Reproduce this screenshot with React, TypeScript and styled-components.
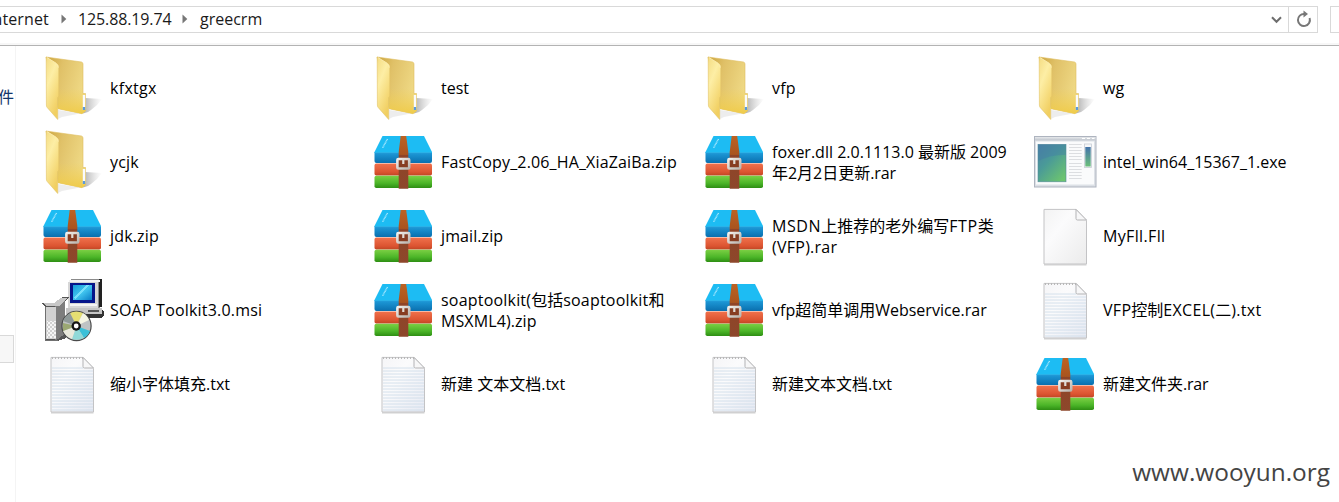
import React from 'react';
import styled, { createGlobalStyle } from 'styled-components';

const Global = createGlobalStyle`
  *, *::before, *::after { box-sizing: border-box; }
  html, body { margin: 0; background: #fff; overflow: hidden; }
  body { font-family: "Open Sans", "Noto Sans", "Noto Sans CJK SC", sans-serif; color: #000; }
  svg { display: block; }
`;

const Explorer = styled.div`
  position: relative;
  display: flex;
  flex-direction: column;
  width: 1339px;
  height: 502px;
  overflow: hidden;
  background: #fff;
`;

const Toolbar = styled.header`
  display: flex;
  flex: none;
  gap: 12px;
  height: 46px;
  padding-top: 6px;
  border-bottom: 1px solid #b3b3b3;
  box-shadow: inset 0 -2px 0 #f7f7f7;
`;

const AddressBar = styled.nav`
  display: flex;
  flex: none;
  align-items: center;
  width: 1318px;
  height: 27px;
  border: 1px solid #d9d9d9;
  border-left: 0;
`;

const Crumb = styled.span<{ $width: number; $shift?: number; $track?: number }>`
  flex: none;
  width: ${p => p.$width}px;
  margin-left: ${p => p.$shift ?? 0}px;
  padding-bottom: 2px;
  font-size: 16px;
  line-height: 22px;
  letter-spacing: ${p => p.$track ?? 0}px;
  white-space: nowrap;
  color: #1a1a1a;
`;

const CrumbArrow = styled.span`
  display: flex;
  flex: none;
  width: 30px;
  padding: 0 0 2px 12px;
`;

const DropButton = styled.span`
  display: flex;
  align-items: center;
  justify-content: center;
  width: 23px;
  margin-left: auto;
`;

const RefreshButton = styled.span`
  display: flex;
  align-items: center;
  justify-content: center;
  width: 29px;
  height: 25px;
  padding: 0 0 2px 2px;
  border-left: 1px solid #d9d9d9;
`;

const SearchBox = styled.div`
  flex: none;
  width: 30px;
  height: 27px;
  border: 1px solid #d9d9d9;
`;

const Body = styled.div`
  display: flex;
  flex: 1;
  min-height: 0;
`;

const Sidebar = styled.aside`
  display: flex;
  flex: none;
  flex-direction: column;
  align-items: flex-end;
  width: 16px;
  padding-top: 39px;
  border-right: 1px solid #f4f4f4;
`;

const SideLabel = styled.span`
  margin-right: 1px;
  font-size: 16px;
  line-height: 24px;
  white-space: nowrap;
  color: #12356b;
`;

const SideSelection = styled.div`
  width: 60px;
  height: 28px;
  margin: 226px 1px 0 0;
  border: 1px solid #d9d9d9;
  background: #f7f7f7;
`;

const FileGrid = styled.main`
  display: grid;
  grid-template-columns: repeat(4, 331px);
  grid-auto-rows: 74px;
  align-content: start;
  padding: 5px 0 0 24px;
`;

const FileItem = styled.div`
  display: flex;
  align-items: center;
  gap: 6px;
  svg { flex: none; }
`;

const FileName = styled.div`
  padding-top: 1px;
  font-size: 16px;
  line-height: 21px;
  white-space: nowrap;
`;

const Line = styled.div<{ $track: number }>`
  height: 21px;
  letter-spacing: ${p => p.$track}px;
`;

const Han = styled.span`
  font-family: "Noto Sans CJK SC", sans-serif;
  font-size: 16px;
  line-height: 1;
  letter-spacing: 0;
  font-weight: 400;
`;

const Watermark = styled.div`
  position: absolute;
  right: 9px;
  bottom: 13px;
  font-family: "Open Sans", "Noto Sans", sans-serif;
  font-size: 24.4px;
  line-height: 34px;
  color: #444;
`;

const FolderIcon = () => (
  <svg width="64" height="64" viewBox="0 0 64 64">
    <defs>
      <linearGradient id="fBack" x1="0" y1="0" x2="1" y2="0.4">
        <stop offset=".05" stopColor="#cfa945" /><stop offset=".4" stopColor="#e0c168" /><stop offset="1" stopColor="#efd985" />
      </linearGradient>
      <linearGradient id="fGlow" x1="0" y1="0" x2="0" y2="1">
        <stop offset=".5" stopColor="#f1cf55" stopOpacity="0" /><stop offset="1" stopColor="#efcb4a" />
      </linearGradient>
      <linearGradient id="fFront" x1="0" y1="0" x2=".5" y2="1">
        <stop offset="0" stopColor="#f4dc83" /><stop offset=".4" stopColor="#fdeea5" /><stop offset="1" stopColor="#f1cf61" />
      </linearGradient>
      <linearGradient id="fShade" x1="0" y1="0" x2="1" y2="0">
        <stop offset="0" stopColor="#777" stopOpacity=".6" /><stop offset="1" stopColor="#aaa" stopOpacity="0" />
      </linearGradient>
    </defs>
    <path d="M45 42 L62 43 Q58 49 51 54 Q48 57 43 57.5Z" fill="url(#fShade)" />
    <path d="M18 54 L40 57.5 L22 61 L18 63Z" fill="#999" opacity=".18" />
    <path d="M6 1 L41.5 6 Q43 6.5 43 8 V37.5 H45.5 V55 L42 57.7 L18 52.7Z" fill="url(#fBack)" stroke="#dfbe5f" strokeWidth=".6" />
    <path d="M18 12 L42 7 V37.5 H45.5 V55 L42 57.7 L18 52.7Z" fill="url(#fGlow)" />
    <path d="M42.8 39 H45.2 V53.5 L42.8 54Z" fill="#f9fbff" />
    <path d="M42.8 51 H45.2 V54 H42.8Z" fill="#5b9bdc" />
    <path d="M6.2 1 L16.5 7.3 Q18.8 8.8 18.8 11.5 V40.3 L17.7 41.5 V63.5 L7.2 51.5 Q6.4 50.7 6.4 49Z" fill="url(#fFront)" stroke="#e3c365" strokeWidth=".6" />
    <path d="M7 1.6 L16 7.2 Q18.2 8.8 18.4 11.5" fill="none" stroke="#fff2bb" strokeWidth=".8" />
  </svg>
);

const ArchiveIcon = () => (
  <svg width="64" height="64" viewBox="0 0 64 64">
    <defs>
      <linearGradient id="aBlue" x1="0" y1="0" x2="0" y2="1">
        <stop offset="0" stopColor="#1f9ddc" /><stop offset="1" stopColor="#0a6fae" />
      </linearGradient>
      <linearGradient id="aRed" x1="0" y1="0" x2="0" y2="1">
        <stop offset="0" stopColor="#f0714c" /><stop offset=".7" stopColor="#dc5431" /><stop offset="1" stopColor="#c04524" />
      </linearGradient>
      <linearGradient id="aGreen" x1="0" y1="0" x2="0" y2="1">
        <stop offset="0" stopColor="#7cd044" /><stop offset=".6" stopColor="#4bb528" /><stop offset="1" stopColor="#2d8d13" />
      </linearGradient>
      <linearGradient id="aStrap" x1="0" y1="0" x2="0" y2="1">
        <stop offset="0" stopColor="#bd6222" /><stop offset=".35" stopColor="#a9541f" /><stop offset=".36" stopColor="#8f4427" /><stop offset="1" stopColor="#8d472b" />
      </linearGradient>
      <linearGradient id="aMetal" x1="0" y1="0" x2="1" y2="1">
        <stop offset="0" stopColor="#f2f0ed" /><stop offset="1" stopColor="#bab5af" />
      </linearGradient>
    </defs>
    <path d="M3.5 22 H61 V31 Q61 33 59 33 H5.5 Q3.5 33 3.5 31Z" fill="url(#aBlue)" />
    <path d="M11.5 6 H53 L61 22 V23 H3.5 V22Z" fill="#1dbcf3" />
    <path d="M4 22.7 H60.5" stroke="#36abe0" strokeWidth=".7" />
    <path d="M16.5 9 L11.5 18" stroke="#a9e8ff" strokeWidth="1.5" strokeDasharray="1 .5" />
    <rect x="3.5" y="33.6" width="57.5" height="12" rx="1.8" fill="url(#aRed)" />
    <rect x="3.5" y="45.7" width="57.5" height="12.4" rx="1.8" fill="url(#aGreen)" />
    <path d="M29.7 6 H35.2 L37.3 22 V58.7 H27.7 V22Z" fill="url(#aStrap)" />
    <rect x="26.4" y="29" width="11.8" height="9.5" rx="1" fill="#873d22" stroke="url(#aMetal)" strokeWidth="2.6" />
    <path d="M32.3 28.5 V34" stroke="#e1ddd7" strokeWidth="2.2" />
  </svg>
);

const ProgramIcon = () => (
  <svg width="64" height="64" viewBox="0 0 64 64">
    <defs>
      <linearGradient id="pPic" x1="0" y1="0" x2=".8" y2="1">
        <stop offset="0" stopColor="#4a80a4" /><stop offset=".45" stopColor="#4a9a98" /><stop offset="1" stopColor="#6cc46f" />
      </linearGradient>
      <linearGradient id="pSide" x1="0" y1="0" x2="0" y2="1">
        <stop offset="0" stopColor="#4474ab" /><stop offset="1" stopColor="#6bbf7b" />
      </linearGradient>
      <linearGradient id="pBar" x1="0" y1="0" x2="0" y2="1">
        <stop offset="0" stopColor="#e6e8eb" /><stop offset="1" stopColor="#bec4cc" />
      </linearGradient>
    </defs>
    <rect x="1.5" y="6.5" width="61.5" height="50.5" fill="#dce0e6" stroke="#aeb4bf" />
    <rect x="2" y="7" width="60.5" height="3.4" fill="url(#pBar)" />
    <path d="M49 8.5 H52 M54 8.5 H57 M59 8.5 H61.5" stroke="#fff" strokeWidth="1.2" />
    <rect x="3" y="11.5" width="58" height="43" fill="#fafbfc" />
    <rect x="5" y="14.3" width="28" height="37.5" fill="url(#pPic)" stroke="#568b9c" strokeWidth=".6" />
    <path d="M5.3 31 Q18 24 32.7 25 V14.6 H5.3Z" fill="#427ba6" opacity=".42" />
    <path d="M36 14.5 H48.7 M36 17.5 H48.7 M36 20.5 H48.7 M36 23.5 H48.7 M36 26.5 H48.7 M36 29.5 H48.7 M36 33.5 H48.7 M36 36.5 H48.7 M36 39.5 H48.7 M36 42.5 H48.7 M36 45.5 H48.7 M36 48.5 H48.7" stroke="#dcdee1" />
    <rect x="51.5" y="14" width="7" height="23.5" fill="#f5f7f9" stroke="#c7ccd4" strokeWidth=".8" />
    <rect x="52.3" y="17" width="5.4" height="19.5" fill="url(#pSide)" />
  </svg>
);

const PageIcon = ({ lined = false }: { lined?: boolean }) => (
  <svg width="64" height="64" viewBox="0 0 64 64">
    <defs>
      <linearGradient id={lined ? 'dLined' : 'dPlain'} x1="0" y1="0" x2="1" y2="1">
        <stop offset="0" stopColor={lined ? '#f5f5f7' : '#f3f3f3'} /><stop offset=".35" stopColor="#fbfbfc" /><stop offset="1" stopColor={lined ? '#e7eaf3' : '#ebebeb'} />
      </linearGradient>
    </defs>
    <path d="M11 60.9 H53.5" stroke="#c5c5c5" strokeWidth="1" />
    <path d="M11 5.4 H43 L53.5 16.5 V60 H11Z" fill={`url(#${lined ? 'dLined' : 'dPlain'})`} stroke="#c3c3c5" strokeWidth="1" />
    {lined && (
      <>
        <path d="M12 16 H43 M12 19 H53 M12 22 H53 M12 25 H53 M12 28 H53 M12 31 H53 M12 34 H53 M12 37 H53 M12 40 H53 M12 43 H53 M12 46 H53 M12 49 H53 M12 52 H53 M12 55 H53 M12 58 H53" stroke="#ccdbe9" strokeWidth=".8" />
        <path d="M12 6 H43" stroke="#b8b8b8" strokeWidth="2" strokeDasharray="1 2" />
      </>
    )}
    <path d="M43 5.4 V14.5 Q43 16 44.5 16 H53.5Z" fill="#f7f7f8" stroke="#b3b3b5" strokeWidth="1" />
  </svg>
);

const InstallerIcon = () => (
  <svg width="64" height="64" viewBox="0 0 64 64">
    <defs>
      <linearGradient id="iScreen" x1="0" y1="0" x2="1" y2="1">
        <stop offset="0" stopColor="#169bd7" /><stop offset=".5" stopColor="#41c5ef" /><stop offset="1" stopColor="#087cc6" />
      </linearGradient>
      <pattern id="iDots" width="4" height="4" patternUnits="userSpaceOnUse">
        <rect width="4" height="4" fill="#d1d1d1" /><path d="M0 0h2v2H0zM2 2h2v2H2z" fill="#f6f6f6" />
      </pattern>
    </defs>
    <g shapeRendering="crispEdges">
      <path d="M28 4 L31 1 H61 V28 L58 31 H28Z" fill="#8a8a8a" />
      <path d="M59 1 H61.5 V29 H59Z" fill="#222" />
      <path d="M28 4 H58 V30 H28Z" fill="#d6d6d6" />
      <path d="M29 3 H60" stroke="#f2f2f2" strokeWidth="2" />
      <rect x="30" y="5" width="25" height="20" fill="#06158a" />
      <rect x="33" y="7" width="19" height="15" fill="url(#iScreen)" />
      <path d="M34 20 L46 7 H49 L36 21Z" fill="#78e0fb" />
      <path d="M30 27 H57" stroke="#f4f4f4" strokeWidth="2" />
      <path d="M26 31 H61 L64 34 V37 L61 40 H28Z" fill="#333" />
      <path d="M26 30 H62 V36 H26Z" fill="#c5c5c5" />
      <path d="M48 33 H59" stroke="#555" strokeWidth="2" />
      <path d="M1 25 H16 L22 19 H29 L25 23 L26 60 L17 63 H5 V29Z" fill="#555" />
      <path d="M15 28 L25 22 V56 L15 63Z" fill="#7d7d7d" />
      <path d="M3 25 H14 L21 20 H28 L19 28 H7Z" fill="#c7c7c7" />
      <rect x="5" y="29" width="11" height="32" fill="#d1d1d1" />
      <rect x="7" y="43" width="9" height="17" fill="url(#iDots)" />
      <path d="M5 29 V62 H18" fill="none" stroke="#707070" strokeWidth="1" />
    </g>
    <circle cx="36.5" cy="48" r="14.6" fill="#bfc3c4" stroke="#4a4a4a" strokeWidth="1.2" />
    <path d="M36.5 48 L30 35 Q36 32 43 35Z" fill="#e6df72" />
    <path d="M36.5 48 L43 35 Q47 37 49 42Z" fill="#f5f5e3" />
    <path d="M36.5 48 L23 43 Q25 38 30 35Z" fill="#8f9998" />
    <path d="M36.5 48 L50 53 Q48 58 44 60Z" fill="#3bc0d8" />
    <path d="M36.5 48 L44 60 Q38 63 32 61Z" fill="#91d9d8" />
    <path d="M36.5 48 L32 61 Q25 58 23 53Z" fill="#e9e9dc" />
    <path d="M36.5 48 L23 53 V45Z" fill="#9ba873" />
    <circle cx="36.2" cy="48" r="4.7" fill="#151515" />
    <circle cx="36.2" cy="48" r="2.4" fill="#fff" />
  </svg>
);

type Kind = 'folder' | 'archive' | 'program' | 'page' | 'text' | 'installer';
type NameLine = [text: string, track?: number];

const icons: Record<Kind, React.ReactElement> = {
  folder: <FolderIcon />,
  archive: <ArchiveIcon />,
  program: <ProgramIcon />,
  page: <PageIcon />,
  text: <PageIcon lined />,
  installer: <InstallerIcon />,
};

const files: { kind: Kind; lines: NameLine[] }[] = [
  { kind: 'folder', lines: [['kfxtgx', 0.3]] },
  { kind: 'folder', lines: [['test']] },
  { kind: 'folder', lines: [['vfp', 0.2]] },
  { kind: 'folder', lines: [['wg', 0.2]] },
  { kind: 'folder', lines: [['ycjk', 0.2]] },
  { kind: 'archive', lines: [['FastCopy_2.06_HA_XiaZaiBa.zip', 0.15]] },
  { kind: 'archive', lines: [['foxer.dll 2.0.1113.0 最新版 2009'], ['年2月2日更新.rar', -0.1]] },
  { kind: 'program', lines: [['intel_win64_15367_1.exe']] },
  { kind: 'archive', lines: [['jdk.zip', 0.15]] },
  { kind: 'archive', lines: [['jmail.zip', 0.1]] },
  { kind: 'archive', lines: [['MSDN上推荐的老外编写FTP类', 0.6], ['(VFP).rar', 0.25]] },
  { kind: 'page', lines: [['MyFll.Fll', 0.35]] },
  { kind: 'installer', lines: [['SOAP Toolkit3.0.msi', 0.2]] },
  { kind: 'archive', lines: [['soaptoolkit(包括soaptoolkit和', 0.2], ['MSXML4).zip', 0.1]] },
  { kind: 'archive', lines: [['vfp超简单调用Webservice.rar']] },
  { kind: 'text', lines: [['VFP控制EXCEL(二).txt', 0.3]] },
  { kind: 'text', lines: [['缩小字体填充.txt']] },
  { kind: 'text', lines: [['新建 文本文档.txt']] },
  { kind: 'text', lines: [['新建文本文档.txt']] },
  { kind: 'archive', lines: [['新建文件夹.rar', -0.2]] },
];

const renderName = (text: string) =>
  text.split(/([\u4e00-\u9fff]+)/).map((part, i) => (i % 2 ? <Han key={i}>{part}</Han> : part));

const Arrow = () => (
  <CrumbArrow>
    <svg width="6" height="10" viewBox="0 0 6 10"><path d="M.5 .5 L5.3 5 L.5 9.5Z" fill="#777" /></svg>
  </CrumbArrow>
);

export default function App() {
  return (
    <>
      <Global />
      <Explorer>
        <Toolbar>
          <AddressBar>
            <Crumb $width={61} $shift={-12} $track={0.1}>Internet</Crumb>
            <Arrow />
            <Crumb $width={92} $shift={-1} $track={-0.12}>125.88.19.74</Crumb>
            <Arrow />
            <Crumb $width={64}>greecrm</Crumb>
            <DropButton>
              <svg width="11" height="8" viewBox="0 0 11 8"><path d="M1 1.2 L5.5 5.8 L10 1.2" fill="none" stroke="#6d6d6d" strokeWidth="2" /></svg>
            </DropButton>
            <RefreshButton>
              <svg width="16" height="18" viewBox="0 0 16 18">
                <path d="M8.5 4 A6 6 0 1 0 13.6 8" fill="none" stroke="#777" strokeWidth="2" />
                <path d="M7.5 .5 L12 4 L7.5 7.5Z" fill="#777" />
              </svg>
            </RefreshButton>
          </AddressBar>
          <SearchBox />
        </Toolbar>
        <Body>
          <Sidebar>
            <SideLabel><Han>件</Han></SideLabel>
            <SideSelection />
          </Sidebar>
          <FileGrid>
            {files.map(({ kind, lines }) => (
              <FileItem key={lines[0][0]}>
                {icons[kind]}
                <FileName>
                  {lines.map(([text, track]) => (
                    <Line key={text} $track={track ?? 0}>{renderName(text)}</Line>
                  ))}
                </FileName>
              </FileItem>
            ))}
          </FileGrid>
        </Body>
        <Watermark>www.wooyun.org</Watermark>
      </Explorer>
    </>
  );
}
